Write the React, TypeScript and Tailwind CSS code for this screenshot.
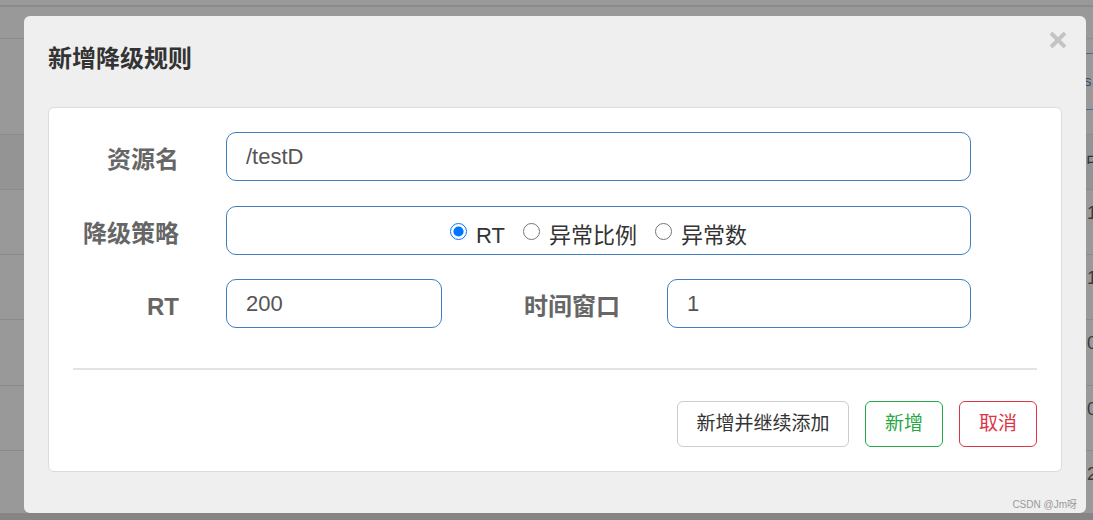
export default function App() {
  const rows = ["1", "1", "0", "0", "2"];
  const rowHeights = ["h-[65px]", "h-[65px]", "h-[66px]", "h-[65px]", "h-[63px]"];

  return (
    <div className="relative w-[1093px] h-[520px] overflow-hidden bg-[#999999] font-['Liberation_Sans','Noto_Sans_CJK_SC',sans-serif]">
      {/* page behind the backdrop */}
      <div className="flex flex-col">
        <div className="h-[5px]" />
        <div className="h-[2px] bg-[#8b8b8b]" />
        <div className="h-[31px]" />
        <div className="h-[96px] border-t border-[#8c8c8c] flex justify-end">
          <div className="w-[7px] mt-[14px] h-[57px] border-y border-[#3f6f9e] overflow-hidden flex items-center">
            <span className="text-[15px] text-[#2d4f70] -ml-[2px]">s.</span>
          </div>
        </div>
        <div className="h-[55px] bg-[#949494] border-t border-[#8c8c8c] flex justify-end items-center">
          <div className="w-[7px] overflow-hidden">
            <span className="text-[17px] text-[#333]">中</span>
          </div>
        </div>
        {rows.map((d, i) => (
          <div key={i} className={`${rowHeights[i]} border-t border-[#8a8a8a] flex justify-end`}>
            <div className="w-[6px] overflow-hidden pt-[10px]">
              <span className="text-[18px] text-[#3a3a3a]">{d}</span>
            </div>
          </div>
        ))}
        <div className="h-[7px] bg-[#858585]" />
      </div>

      {/* modal */}
      <div className="absolute left-[24px] top-[16px] w-[1062px] h-[497px] rounded-[6px] bg-[#efefef] flex flex-col">
        <div className="h-[91px] px-[24px] pt-[27px]">
          <h2 className="text-[24px] leading-[32px] font-bold text-[#333]">新增降级规则</h2>
        </div>
        <button className="absolute right-[19px] top-[16px] w-[18px] h-[16px]">
          <svg width="18" height="16" viewBox="0 0 18 16">
            <path d="M2 1 L16 15 M16 1 L2 15" stroke="#c4c4c4" strokeWidth="4" />
          </svg>
        </button>

        <div className="ml-[24px] w-[1014px] h-[365px] bg-white border border-[#dcdcdc] rounded-[6px] px-[24px] pt-[24px]">
          <div className="flex items-center h-[49px]">
            <label className="w-[153px] pr-[47px] pt-[7px] text-right text-[24px] font-bold text-[#666]">资源名</label>
            <div className="w-[745px] h-[49px] rounded-[10px] border border-[#3e7fc1] pl-[19px] flex items-center text-[22px] text-[#555]">
              /testD
            </div>
          </div>

          <div className="flex items-center h-[49px] mt-[25px]">
            <label className="w-[153px] pr-[47px] pt-[7px] text-right text-[24px] font-bold text-[#666]">降级策略</label>
            <div className="w-[745px] h-[49px] rounded-[10px] border border-[#3e7fc1] flex items-center justify-center pt-[10px] text-[22px] text-[#333]">
              <input type="radio" name="grade" defaultChecked className="w-[17px] h-[17px] m-0 -mt-[9px]" />
              <span className="ml-[9px]">RT</span>
              <input type="radio" name="grade" className="w-[17px] h-[17px] m-0 -mt-[9px] ml-[18px]" />
              <span className="ml-[9px]">异常比例</span>
              <input type="radio" name="grade" className="w-[17px] h-[17px] m-0 -mt-[9px] ml-[18px]" />
              <span className="ml-[9px]">异常数</span>
            </div>
          </div>

          <div className="flex items-center h-[49px] mt-[24px]">
            <label className="w-[153px] pr-[47px] pt-[7px] text-right text-[24px] font-bold text-[#666]">RT</label>
            <div className="w-[216px] h-[49px] rounded-[10px] border border-[#3e7fc1] pl-[19px] flex items-center text-[22px] text-[#555]">
              200
            </div>
            <label className="w-[225px] pr-[47px] pt-[7px] text-right text-[24px] font-bold text-[#666]">时间窗口</label>
            <div className="w-[304px] h-[49px] rounded-[10px] border border-[#3e7fc1] pl-[19px] flex items-center text-[22px] text-[#555]">
              1
            </div>
          </div>

          <div className="mt-[40px] h-[2px] bg-[#e3e3e3]" />

          <div className="mt-[31px] flex justify-end gap-[16px]">
            <button className="h-[46px] w-[172px] rounded-[6px] border border-[#cccccc] bg-white text-[19px] text-[#333]">
              新增并继续添加
            </button>
            <button className="h-[46px] w-[78px] rounded-[6px] border border-[#28a745] bg-white text-[19px] text-[#28a745]">
              新增
            </button>
            <button className="h-[46px] w-[78px] rounded-[6px] border border-[#dc3545] bg-white text-[19px] text-[#dc3545]">
              取消
            </button>
          </div>
        </div>
      </div>

      <div className="absolute right-[16px] bottom-[8px] text-[10px] text-[#9a9a9a]">CSDN @Jm呀</div>
    </div>
  );
}
